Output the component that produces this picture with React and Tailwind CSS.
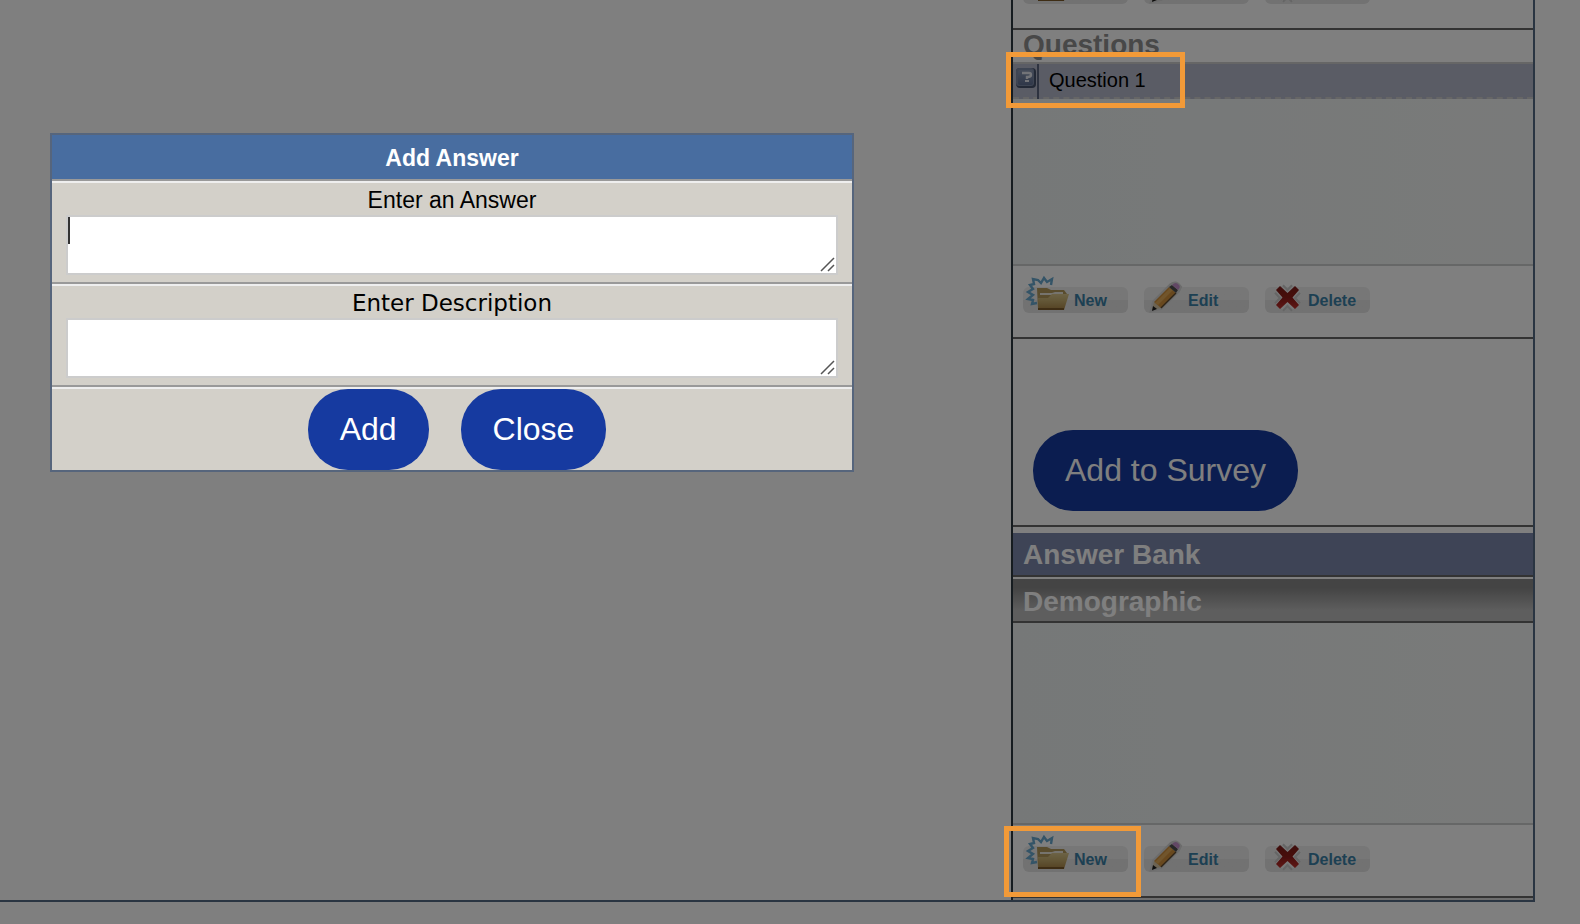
import React, { useState } from "react";

const artFilter = (id) => (
  <defs>
    <filter id={id} x="-20%" y="-20%" width="140%" height="140%">
      <feGaussianBlur stdDeviation="0.7" />
    </filter>
  </defs>
);

function FolderIcon({ id }) {
  return (
    <svg className="absolute left-0 bottom-0 w-[50px] h-[38px]" viewBox="0 0 50 38">
      {artFilter(id)}
      <defs>
        <linearGradient id={`${id}-front`} x1="0" y1="0" x2="0" y2="1">
          <stop offset="0" stopColor="#d9c68c" />
          <stop offset="0.4" stopColor="#c8b070" />
          <stop offset="1" stopColor="#a88345" />
        </linearGradient>
      </defs>
      <g filter={`url(#${id})`}>
        <path
          d="M28 10 L29 4 L24 7 L21 3 L18 8 L15 5 L10 4 L11 9 L7 10 L10 14 L5 17 L10 20 L5 24 L10 25 L9 29 L14 28"
          fill="none"
          stroke="#68a8ce"
          strokeWidth="2.4"
        />
        <path d="M14 13 h10 l4 2 h13 l3 4 l-4 15 h-25 z" fill="#b3985a" />
        <path d="M17 18 h12 l3 -1 h8 v3 h-23 z" fill="#ece8dc" />
        <path d="M15 23 h10 l4 -4 h17 l-5 16 h-25 z" fill={`url(#${id}-front)`} />
        <path d="M15 34 h26" stroke="#7d5a2b" strokeWidth="2" />
      </g>
    </svg>
  );
}

function PencilIcon({ id }) {
  return (
    <svg className="absolute left-0 bottom-0 w-[50px] h-[38px]" viewBox="0 0 50 38">
      {artFilter(id)}
      <g filter={`url(#${id})`}>
        <path d="M8 35 L10 27 L27 10 Q32 6 36 12 L34 16 L17 33 Z" fill="#d2d2d2" stroke="#d8d8d8" strokeWidth="4" />
        <path d="M8 35 L10 27 L17 33 Z" fill="#d9c7a6" />
        <path d="M8 36 L9 31 L13 34 Z" fill="#1c1c1c" />
        <path d="M10 27 L25 12 L32 18 L17 33 Z" fill="#d0913c" />
        <path d="M11 28 L26 13 L29 15 L14 30 Z" fill="#e3aa58" />
        <path d="M17 33 L32 18" stroke="#5e4a2e" strokeWidth="1.5" />
        <path d="M25 12 L28 10 L34 15 L32 18 Z" fill="#505050" />
        <path d="M28 10 Q32 6 35 10 Q37 12 34 15 Z" fill="#c48fca" />
      </g>
    </svg>
  );
}

function CrossIcon({ id }) {
  return (
    <svg className="absolute left-0 bottom-0 w-[50px] h-[38px]" viewBox="0 0 50 38">
      {artFilter(id)}
      <defs>
        <linearGradient id={`${id}-red`} x1="0" y1="0" x2="0" y2="1">
          <stop offset="0" stopColor="#7c1c1a" />
          <stop offset="0.5" stopColor="#8f1a18" />
          <stop offset="1" stopColor="#c0302c" />
        </linearGradient>
      </defs>
      <g filter={`url(#${id})`}>
        <path d="M14 14 L31 32 M31 14 L14 32" stroke="#cccccc" strokeWidth="13" />
        <path d="M14 14 L31 32 M31 14 L14 32" stroke="#f0f0f0" strokeWidth="9" />
        <path
          d="M15 11 L22.5 18 L30 11 L34 15 L27.5 22.5 L34 30 L30 34 L22.5 27 L15 34 L11 30 L17.5 22.5 L11 15 Z"
          fill={`url(#${id}-red)`}
        />
      </g>
    </svg>
  );
}

function QuestionIcon() {
  return (
    <svg className="w-5 h-5" viewBox="0 0 20 20">
      <defs>
        <linearGradient id="question-face" x1="0" y1="0" x2="0" y2="1">
          <stop offset="0" stopColor="#8c99b4" />
          <stop offset="1" stopColor="#5f6f92" />
        </linearGradient>
      </defs>
      <rect x="0" y="0" width="20" height="20" rx="4" fill="#46526c" />
      <rect x="0" y="0" width="18" height="18" rx="3" fill="#7d8aa6" />
      <rect x="2" y="2" width="15" height="15" rx="2" fill="url(#question-face)" />
      <path d="M6 5 H13 Q15 5 15 7 Q15 9 11 9 V11" fill="none" stroke="#e6e9f0" strokeWidth="2.4" />
      <path d="M9 12 h4 v2 h-4 z" fill="#e6e9f0" />
    </svg>
  );
}

function ToolButton({ label, icon, pad }) {
  return (
    <button
      type="button"
      className={`relative w-[105px] h-[26px] rounded-md bg-linear-to-b from-[#eeeeee] from-50% to-[#e4e4e4] to-50% text-left text-base leading-[28px] font-bold text-[#3a80a6] ${pad}`}
    >
      {icon}
      {label}
    </button>
  );
}

function Toolbar({ name, children }) {
  return (
    <div className="relative h-[71px] px-[10px] pt-[21px] flex items-start gap-4">
      <ToolButton label="New" icon={<FolderIcon id={`${name}-new`} />} pad="pl-[51px]" />
      <ToolButton label="Edit" icon={<PencilIcon id={`${name}-edit`} />} pad="pl-[44px]" />
      <ToolButton label="Delete" icon={<CrossIcon id={`${name}-delete`} />} pad="pl-[43px]" />
      {children}
    </div>
  );
}

function AnswerField({ id, label, labelClass, value, onChange, caret }) {
  return (
    <div className="border-t-2 border-[#999999]">
      <div className="border-t-2 border-[#eeeeee] px-[14px] pb-[7px]">
        <label htmlFor={id} className={`block h-8 text-center text-[23px] leading-[34px] text-black ${labelClass}`}>
          {label}
        </label>
        <div className="relative">
          <textarea
            id={id}
            className="block w-full h-[60px] resize-none bg-white border-2 border-[#cccccc] outline-0 text-[23px]"
            value={value}
            onChange={(e) => onChange(e.target.value)}
          />
          {caret && <span className="absolute left-[2px] top-[2px] w-[2px] h-[27px] bg-[#333333]" />}
          <svg className="absolute right-[3px] bottom-[3px] w-4 h-4" viewBox="0 0 16 16">
            <path d="M2 15 L15 2 M9 15 L15 9" stroke="#555555" strokeWidth="1.5" fill="none" />
          </svg>
        </div>
      </div>
    </div>
  );
}

function App() {
  const [answer, setAnswer] = useState("");
  const [description, setDescription] = useState("");

  return (
    <div className="h-screen overflow-hidden bg-white font-['Liberation_Sans',Arial,sans-serif] flex flex-col justify-end pb-[22px]">
      {/* survey builder, scrolled to the bottom */}
      <div className="mr-[45px] flex shrink-0 border-r-2 border-b-2 border-[#546a84]">
        <div className="flex-1" />
        <aside className="w-[522px] border-l-2 border-[#2c3840]">
          <Toolbar name="group" />

          <h2 className="h-9 border-t-2 border-b-2 border-t-[#666666] border-b-[#cccccc] px-[10px] text-[28px] leading-[30px] font-bold text-[#909090]">
            Questions
          </h2>
          <ul className="h-[200px] bg-linear-to-r from-[#ecf1f1] to-[#f3f5f4]">
            <li className="relative h-[35px] flex items-start bg-[#b4b8ca] border-b-2 border-dashed border-[#cccccc]">
              <div className="h-[35px] shrink-0 pl-[3px] pr-[1px] pt-1 border-r-2 border-[#5c6680]">
                <QuestionIcon />
              </div>
              <span className="pl-[10px] text-xl leading-[33px] text-black">Question 1</span>
              <span className="pointer-events-none absolute z-20 -left-[7px] -top-3 w-[179px] h-14 border-5 border-[#f29a38]" />
            </li>
          </ul>
          <div className="border-t-2 border-[#cccfcf]">
            <Toolbar name="question" />
          </div>

          <div className="h-[190px] flex items-end border-t-2 border-b-2 border-[#666666] pl-5 pb-[14px]">
            <button type="button" className="rounded-[40px] bg-[#163aa0] px-8 pb-[2px] h-[81px] text-[32px] text-white">
              Add to Survey
            </button>
          </div>

          <h2 className="mt-[6px] h-11 border-b-2 border-[#666666] bg-[#7c88ac] px-[10px] text-[28px] leading-[44px] font-bold text-white">
            Answer Bank
          </h2>
          <h3 className="mt-[2px] h-11 border-b-2 border-[#666666] bg-linear-to-b from-[#888888] from-20% to-[#bcbcbc] to-75% px-[10px] text-[28px] leading-[46px] font-bold text-white">
            Demographic
          </h3>
          <div className="h-[200px] bg-linear-to-r from-[#ecf1f1] to-[#f3f5f4]" />
          <div className="border-t-2 border-b-2 border-t-[#cccfcf] border-b-[#666666]">
            <Toolbar name="answer">
              <span className="pointer-events-none absolute z-20 -left-[9px] top-[1px] w-[137px] h-[71px] border-5 border-[#f29a38]" />
            </Toolbar>
          </div>
          <div className="h-[2px] bg-[#dddddd]" />
        </aside>
      </div>

      <div className="fixed inset-0 z-10 bg-black/50" />

      {/* add answer dialog */}
      <form
        className="fixed z-20 left-[50px] top-[133px] w-[804px] max-w-full bg-[#d3d0c9] border-2 border-[#56657c]"
        onSubmit={(e) => e.preventDefault()}
      >
        <h1 className="h-11 bg-[#486da0] text-center text-[23px] leading-[46px] font-bold text-white">Add Answer</h1>
        <AnswerField id="answer" label="Enter an Answer" labelClass="" value={answer} onChange={setAnswer} caret />
        <AnswerField
          id="description"
          label="Enter Description"
          labelClass="font-['DejaVu_Sans',Verdana,sans-serif]"
          value={description}
          onChange={setDescription}
        />
        <div className="border-t-2 border-[#999999]">
          <div className="border-t-2 border-[#eeeeee] flex justify-center gap-8 pl-[10px]">
            <button type="submit" className="rounded-[40px] bg-[#163aa0] px-8 pb-[2px] h-[81px] text-[32px] text-white">
              Add
            </button>
            <button type="button" className="rounded-[40px] bg-[#163aa0] px-8 pb-[2px] h-[81px] text-[32px] text-white">
              Close
            </button>
          </div>
        </div>
      </form>
    </div>
  );
}

export default App;
